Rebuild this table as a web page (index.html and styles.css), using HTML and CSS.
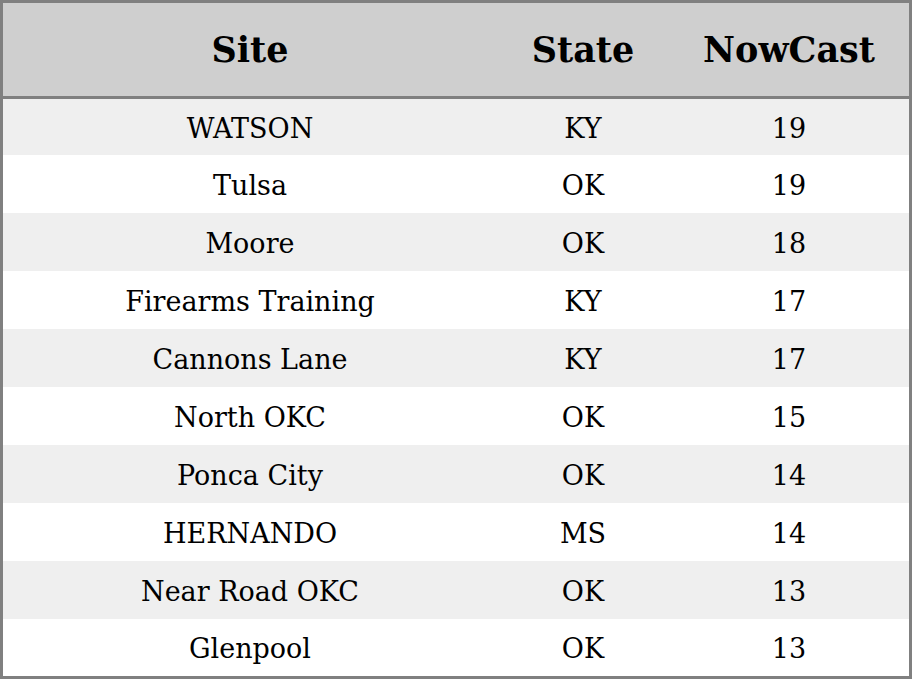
FILE: index.html
```html
<!DOCTYPE html>
<html>
<head>
<meta charset="utf-8">
<link rel="stylesheet" href="styles.css">
</head>
<body>
<table class="aq">
  <thead>
    <tr><th class="c-site">Site</th><th class="c-state">State</th><th class="c-now">NowCast</th></tr>
  </thead>
  <tbody>
    <tr class="first"><td>WATSON</td><td>KY</td><td>19</td></tr>
    <tr><td>Tulsa</td><td>OK</td><td>19</td></tr>
    <tr><td>Moore</td><td>OK</td><td>18</td></tr>
    <tr><td>Firearms Training</td><td>KY</td><td>17</td></tr>
    <tr><td>Cannons Lane</td><td>KY</td><td>17</td></tr>
    <tr><td>North OKC</td><td>OK</td><td>15</td></tr>
    <tr><td>Ponca City</td><td>OK</td><td>14</td></tr>
    <tr><td>HERNANDO</td><td>MS</td><td>14</td></tr>
    <tr><td>Near Road OKC</td><td>OK</td><td>13</td></tr>
    <tr class="last"><td>Glenpool</td><td>OK</td><td>13</td></tr>
  </tbody>
</table>
</body>
</html>
```

FILE: styles.css
```css
html, body {
  margin: 0;
  padding: 0;
  background: #ffffff;
}
.aq {
  width: 912px;
  border: 3px solid #808080;
  border-collapse: separate;
  border-spacing: 0;
  table-layout: fixed;
  font-family: "DejaVu Serif", serif;
  color: #000;
}
.aq th {
  background: #cfcfcf;
  height: 93px;
  padding: 0;
  font-size: 35px;
  font-weight: bold;
  text-align: center;
  vertical-align: middle;
  border-bottom: 3px solid #808080;
}
.c-site { width: 494px; }
.c-state { width: 172px; }
.c-now { width: 240px; }
.aq td {
  height: 58px;
  padding: 2px 0 0 0;
  font-size: 27px;
  text-align: center;
  vertical-align: middle;
}
.aq tbody tr:nth-child(odd) td {
  background: #efefef;
}
.aq tr.first td { height: 54px; }
.aq tr td { height: 56px; }
.aq tr.first td { height: 54px; }
.aq tr.last td { height: 55px; }
```
